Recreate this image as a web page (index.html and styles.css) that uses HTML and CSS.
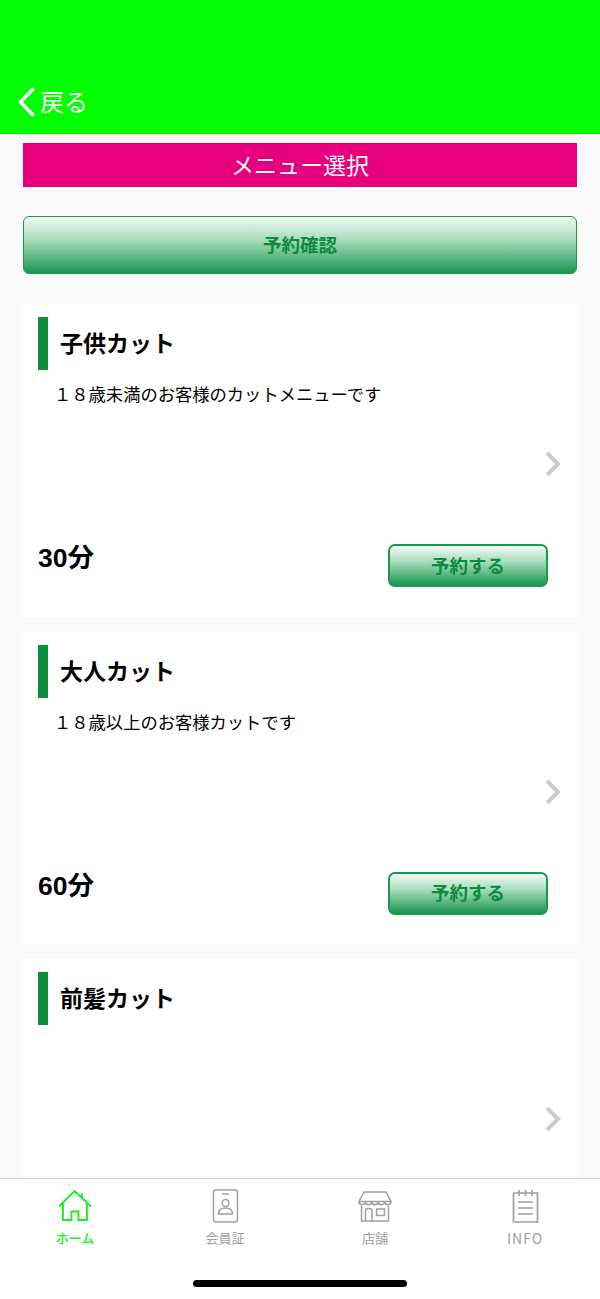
FILE: index.html
```html
<!DOCTYPE html>
<html lang="ja">
<head>
    <meta charset="UTF-8">
    <meta name="viewport" content="width=device-width, initial-scale=1.0">
    <title>メニュー選択</title>
    <link rel="stylesheet" href="styles.css">
</head>
<body>
    <div class="app">
        <header class="header">
            <a href="#" class="back">
                <svg class="back_icon" width="18" height="30" viewBox="0 0 18 30"><path d="M15.500 2.500 3.500 15l12 12.500" fill="none" stroke="#fff" stroke-width="3.600" stroke-linecap="round" stroke-linejoin="round"/></svg>
                <span>戻る</span>
            </a>
        </header>

        <main class="content">
            <h1 class="page_title">メニュー選択</h1>
            <a href="#" class="btn btn_confirm">予約確認</a>

            <section class="card">
                <h2 class="card_title">子供カット</h2>
                <p class="card_desc">１８歳未満のお客様のカットメニューです</p>
                <div class="card_arrow">
                    <svg width="18" height="28" viewBox="0 0 18 28"><path d="M3 3l11 11L3 25" fill="none" stroke="#ccc" stroke-width="4"/></svg>
                </div>
                <div class="card_foot">
                    <span class="card_time">30分</span>
                    <a href="#" class="btn btn_reserve">予約する</a>
                </div>
            </section>

            <section class="card">
                <h2 class="card_title">大人カット</h2>
                <p class="card_desc">１８歳以上のお客様カットです</p>
                <div class="card_arrow">
                    <svg width="18" height="28" viewBox="0 0 18 28"><path d="M3 3l11 11L3 25" fill="none" stroke="#ccc" stroke-width="4"/></svg>
                </div>
                <div class="card_foot">
                    <span class="card_time">60分</span>
                    <a href="#" class="btn btn_reserve">予約する</a>
                </div>
            </section>

            <section class="card">
                <h2 class="card_title">前髪カット</h2>
                <p class="card_desc"></p>
                <div class="card_arrow">
                    <svg width="18" height="28" viewBox="0 0 18 28"><path d="M3 3l11 11L3 25" fill="none" stroke="#ccc" stroke-width="4"/></svg>
                </div>
            </section>
        </main>

        <nav class="tabbar">
            <ul class="tabs">
                <li class="tab tab_on">
                    <svg width="36" height="34" viewBox="0 0 36 34" fill="none" stroke="currentColor" stroke-width="1.800"><path d="M2 17.500 17.500 2 34 17.500M25 9V4.500M6 14.500V31h8.500V22.500h7V31H30V14.500"/></svg>
                    <span>ホーム</span>
                </li>
                <li class="tab">
                    <svg width="36" height="34" viewBox="0 0 36 34" fill="none" stroke="currentColor" stroke-width="1.500"><rect x="6.500" y="1" width="24" height="32" rx="2.500"/><path d="M15 5h7"/><circle cx="18.500" cy="14" r="3.400"/><path d="M11.500 25c0-4.500 3-6 7-6s7 1.500 7 6z"/></svg>
                    <span>会員証</span>
                </li>
                <li class="tab">
                    <svg width="36" height="34" viewBox="0 0 36 34" fill="none" stroke="currentColor" stroke-width="1.500"><path d="M7 3h22l5 9.500H2z"/><path d="M2 12.500a3.200 3.200 0 0 0 6.400 0 3.200 3.200 0 0 0 6.400 0 3.200 3.200 0 0 0 6.400 0 3.200 3.200 0 0 0 6.400 0 3.200 3.200 0 0 0 6.400 0"/><path d="M4.500 17v15h27V17M8.500 32V22a2.500 2.500 0 0 1 2.500-2.500h1.500a2.500 2.500 0 0 1 2.500 2.500v10M19.500 20h8v6.500h-8z"/></svg>
                    <span>店舗</span>
                </li>
                <li class="tab">
                    <svg width="36" height="34" viewBox="0 0 36 34" fill="none" stroke="currentColor" stroke-width="1.700"><path d="M6.500 4h24v29h-24z"/><path d="M12 1v6M18.500 1v6M25 1v6M11 13h15M11 19h15M11 25h15"/></svg>
                    <span class="tab_latin">INFO</span>
                </li>
            </ul>
            <div class="home_bar"></div>
        </nav>
    </div>
</body>
</html>
```

FILE: styles.css
```css
* {
    margin: 0;
    padding: 0;
    box-sizing: border-box;
}

body {
    background: #f9f9f9;
    font-family: "Noto Sans CJK JP", "Noto Sans", sans-serif;
    color: #000;
}

a {
    text-decoration: none;
}

li {
    list-style: none;
}

.app {
    display: flex;
    flex-direction: column;
    height: 1299px;
    overflow: hidden;
}

.header {
    flex: none;
    display: flex;
    align-items: flex-end;
    height: 134px;
    padding: 0 0 17px 17px;
    background: #00ff00;
}

.back {
    display: flex;
    align-items: center;
    gap: 5px;
    color: #fff;
    font-size: 24px;
    line-height: 30px;
}

.back span {
    margin-top: -2px;
}

.content {
    flex: 1;
    min-height: 0;
    overflow: hidden;
    padding: 9px 23px 0;
}

.page_title {
    height: 44px;
    background: #e6007e;
    color: #fff;
    font-size: 23px;
    font-weight: 400;
    line-height: 43px;
    text-align: center;
}

.btn {
    display: flex;
    align-items: center;
    justify-content: center;
    padding-bottom: 2px;
    border: 1.500px solid #1a9850;
    background: linear-gradient(#f2faf5 0%, #a9dcbd 40%, #1a9850 100%);
    color: #0b8a42;
    font-weight: 700;
}

.btn_confirm {
    height: 58px;
    margin: 29px 0 30px;
    border-radius: 6px;
    font-size: 18.500px;
}

.card {
    display: flex;
    flex-direction: column;
    height: 312.500px;
    margin-bottom: 15px;
    padding: 13px 15px 29.500px;
    background: #fff;
}

.card_title {
    height: 53px;
    padding-left: 12px;
    border-left: 10px solid #0b8f3c;
    font-size: 23px;
    font-weight: 700;
    line-height: 50px;
}

.card_desc {
    height: 50px;
    padding: 11px 0 0 16px;
    font-size: 17.300px;
    line-height: 26px;
}

.card_arrow {
    display: flex;
    justify-content: flex-end;
    margin-top: 30px;
}

.card_foot {
    display: flex;
    justify-content: space-between;
    align-items: flex-start;
    margin-top: auto;
    padding-right: 14px;
}

.card_time {
    font-family: "Liberation Sans", "Noto Sans CJK JP", sans-serif;
    font-size: 26.500px;
    font-weight: 700;
    line-height: 28px;
}

.btn_reserve {
    width: 160px;
    height: 43px;
    border-width: 2px;
    border-radius: 7px;
    font-size: 18.500px;
}

.tabbar {
    flex: none;
    height: 121px;
    border-top: 1px solid #ccc;
    background: #fff;
}

.tabs {
    display: grid;
    grid-template-columns: repeat(4, 1fr);
    padding-top: 10px;
}

.tab {
    display: flex;
    flex-direction: column;
    align-items: center;
    gap: 6px;
    color: #a0a0a0;
    font-size: 13px;
    line-height: 18px;
}

.tab_on {
    color: #19f019;
    font-weight: 500;
}

.tab_latin {
    font-size: 14px;
    letter-spacing: 1px;
}

.home_bar {
    width: 214px;
    height: 7px;
    margin: 33px auto 0;
    border-radius: 4px;
    background: #000;
}
```
